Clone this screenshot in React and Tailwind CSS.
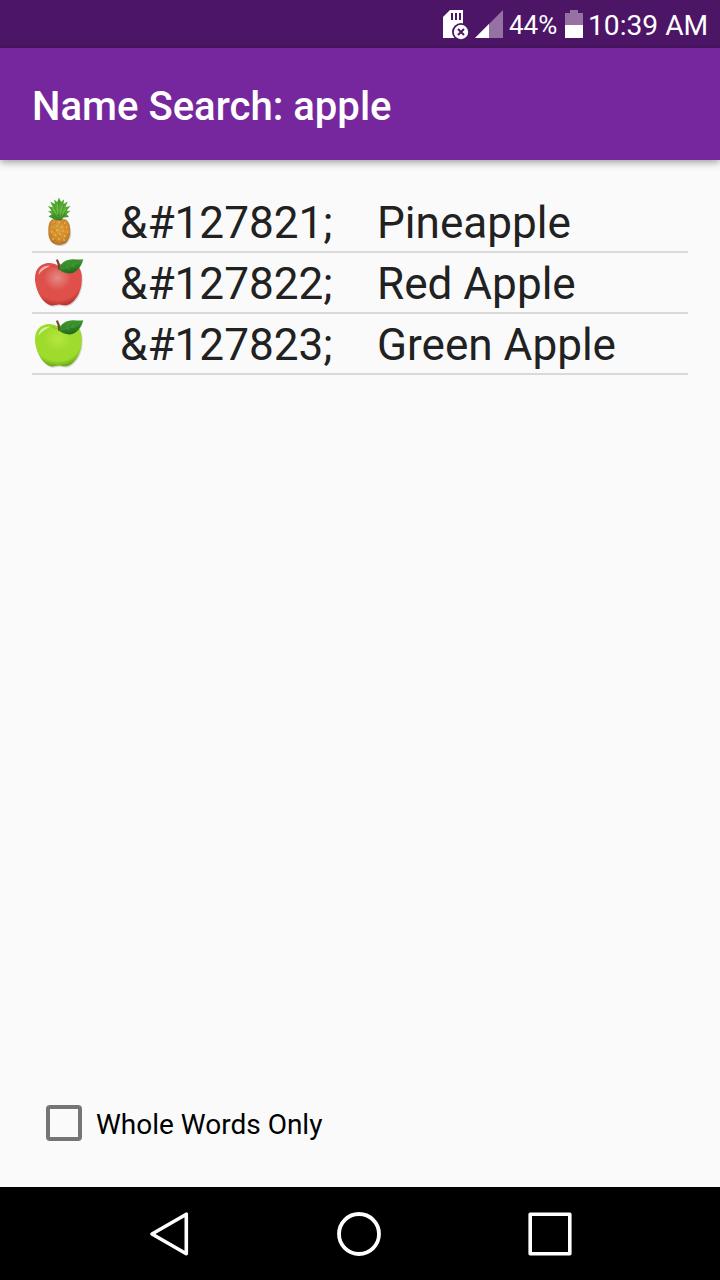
import React from "react";

const results = [
  { code: "&#127821;", name: "Pineapple", icon: <PineappleIcon /> },
  { code: "&#127822;", name: "Red Apple", icon: <AppleIcon id="red" light="#e58a83" mid="#e0504b" dark="#b93331" /> },
  { code: "&#127823;", name: "Green Apple", icon: <AppleIcon id="green" light="#b9e640" mid="#9fdb2c" dark="#69ab18" /> },
];

function PineappleIcon() {
  return (
    <svg width="56" height="59" viewBox="0 0 56 59" className="block">
      <defs>
        <radialGradient id="pine-body" cx="0.5" cy="0.4" r="0.62">
          <stop offset="0" stopColor="#e0a03a" />
          <stop offset="0.65" stopColor="#d38d30" />
          <stop offset="1" stopColor="#b27026" />
        </radialGradient>
        <linearGradient id="pine-leaf" x1="0" y1="0" x2="0" y2="1">
          <stop offset="0" stopColor="#46a02b" />
          <stop offset="0.6" stopColor="#5db439" />
          <stop offset="1" stopColor="#357d24" />
        </linearGradient>
      </defs>
      <ellipse cx="28" cy="41.5" rx="11.2" ry="12.6" fill="#000" opacity="0.16" />
      <path d="M20 27.5Q27 25.5 34 27.5Q38.5 31 38.2 38Q38.6 46 34 51Q27 55 20.5 51Q16 47 16.3 39Q15.7 31 20 27.5Z" fill="url(#pine-body)" />
      {/* skin pattern */}
      <path d="M18 33L33 51M20 28L37 46M27 27L38 38M17 41L27 53M36 33L21 51M33 28L17 44M27 27L17 36M38 41L28 53" stroke="#a46b20" strokeWidth="0.7" opacity="0.45" />
      <path d="M21 30h1.5M26 30h2M32 31h1.5M19 35h1.5M24 34h2M29 35h2M34 35h1.5M19 40h2M24 38h2M30 39h2M35 40h1M22 43h2M27 42h2M32 44h2M20 47h2M26 47h2M31 48h2" stroke="#f0bf4e" strokeWidth="1.5" opacity="0.75" />
      {/* crown */}
      <path d="M27 5.5L29 10L32 7.5L31.5 12L35.7 9.5L33.5 15L38.5 14L34.7 18.5L38.5 19.2L34.5 22L37 25L31.5 25.5L29 28.5L24 28L20.5 26.5L16.5 24.5L20 22L16 19.5L19.5 18.5L15.8 14L20.8 15.2L18.2 9.5L23 12L22 7.5L25.3 10Z" fill="url(#pine-leaf)" />
      <path d="M27 8L26.5 24M22 12L25 23M32 12L29 23M18 15.5L24 24M36 15.5L31 24M18 20L23 25M36 20L31 25" stroke="#23641b" strokeWidth="0.7" opacity="0.45" fill="none" />
      <path d="M25.5 12L26 22M30.5 13L28.5 22M21.5 17L25 23M33.5 17L30 23" stroke="#8fd158" strokeWidth="0.8" opacity="0.7" />
    </svg>
  );
}

function AppleIcon({ id, light, mid, dark }) {
  const body =
    "M26 12.5C22 9.6 15 8.8 9.5 12C3 16 1.8 24 4 33C6.3 42.5 12 50.3 18.5 52.2C22 53.1 24 51.4 27 51.5C30 51.4 32 53.1 35.5 52C42.5 49.8 48 41 49.4 32C50.6 23.5 49.8 15.5 44.5 12C39.5 9 31 9.6 26 12.5Z";
  return (
    <svg width="56" height="59" viewBox="0 0 56 59" className="block">
      <defs>
        <radialGradient id={`${id}-body`} cx="0.48" cy="0.35" r="0.65">
          <stop offset="0" stopColor={light} />
          <stop offset="0.45" stopColor={mid} />
          <stop offset="0.8" stopColor={mid} />
          <stop offset="1" stopColor={dark} />
        </radialGradient>
        <linearGradient id={`${id}-leaf`} x1="0" y1="0" x2="0.3" y2="1">
          <stop offset="0" stopColor="#3f9a30" />
          <stop offset="0.5" stopColor="#348c29" />
          <stop offset="1" stopColor="#22691f" />
        </linearGradient>
      </defs>
      <path d={body} fill="#000" opacity="0.14" transform="translate(0.8 1.2)" />
      <path d={body} fill={`url(#${id}-body)`} />
      <path d="M6.5 22C7 15.5 12 12 18 12.8C15 15 10 16.5 6.5 22Z" fill="#fff" opacity="0.6" />
      <path d="M20 12.5Q26 17 33 14" stroke={dark} strokeWidth="1.5" fill="none" opacity="0.35" />
      <path d="M27.2 16C27.2 12 26.6 9.5 25.2 7.4" stroke="#76442f" strokeWidth="2.2" fill="none" strokeLinecap="round" />
      <path d="M27 16.5C28 9.5 34.5 5.8 42 6.2C46 6.7 49 6.4 51.2 6.2C49.5 13.5 45 19.8 38 20.4C33.5 20.6 29.5 18.6 27 16.5Z" fill={`url(#${id}-leaf)`} />
      <path d="M28.5 15.8C35 14.8 42 12.8 48.5 8.2M34 14.6L37 10M39 13L42.5 9.5M35 14.6L38.5 17M40 12.8L43.5 14" stroke="#84bd68" strokeWidth="0.6" fill="none" opacity="0.4" />
    </svg>
  );
}

const StatusBar = () => {
  return (
    <div className="flex h-12 items-center bg-[#4d1566] pl-[443px] whitespace-nowrap text-white">
      {/* sd card removed */}
      <svg width="26" height="30" viewBox="0 0 26 30" className="mt-0.5 shrink-0">
        <path d="M7 0H20V28H0V7Z" fill="#fff" />
        <path d="M8 3h2v7H8zM12 3h2v7h-2zM16 3h2v7h-2z" fill="#4d1566" />
        <circle cx="18" cy="22" r="9" fill="#4d1566" />
        <circle cx="18" cy="22" r="7.2" fill="#fff" />
        <path d="M15 19L21 25M21 19L15 25" stroke="#4d1566" strokeWidth="2" />
      </svg>
      {/* signal */}
      <svg width="28" height="28" viewBox="0 0 28 28" className="ml-1.5 shrink-0">
        <path d="M28 0V28H0Z" fill="#9672a4" />
        <path d="M14 14V28H0Z" fill="#fff" />
      </svg>
      <span className="mt-0.5 ml-1.5 w-[50px] text-[26px] leading-[48px]">44%</span>
      {/* battery */}
      <svg width="18" height="28" viewBox="0 0 18 28" className="ml-1.5 shrink-0">
        <path d="M5 0h8v3h5v12H0V3h5z" fill="#9672a4" />
        <path d="M0 15h18v13H0z" fill="#fff" />
      </svg>
      <span className="mt-[3px] ml-[5px] text-[28.2px] leading-[48px]">10:39 AM</span>
    </div>
  );
};

const NavBar = () => {
  return (
    <div className="flex h-[93px] items-center justify-between bg-black pr-[147px] pl-[149px]">
      <svg width="42" height="46" viewBox="0 0 42 46" fill="none" stroke="#fff" strokeWidth="3.6" strokeLinejoin="round">
        <path d="M37.3 3.2V42.8L3 23Z" />
      </svg>
      <svg width="46" height="46" viewBox="0 0 46 46" fill="none" stroke="#fff" strokeWidth="3.8">
        <circle cx="23" cy="23" r="20" />
      </svg>
      <svg width="46" height="46" viewBox="0 0 46 46" fill="none" stroke="#fff" strokeWidth="3.6" strokeLinejoin="round">
        <path d="M3.2 3.2H42.8V42.8H3.2Z" />
      </svg>
    </div>
  );
};

const App = () => {
  return (
    <div className="flex h-[1280px] w-[720px] flex-col overflow-hidden bg-[#fafafa] font-['Roboto',sans-serif]">
      <StatusBar />

      {/* toolbar */}
      <header className="flex h-28 items-center bg-[#77279d] px-8 shadow-[0_2px_8px_rgba(0,0,0,0.4)]">
        <h1 className="mt-1.5 text-[40.1px] leading-[48px] font-medium text-white">Name Search: apple</h1>
      </header>

      {/* results */}
      <ul className="flex-1 px-8 pt-8">
        {results.map((item) => (
          <li key={item.code} className="flex h-[61px] border-b-2 border-[#d9d9d9] text-[44.1px] leading-[62px] text-[#212121]">
            <div className="w-[88px]">{item.icon}</div>
            <span className="w-[257px]">{item.code}</span>
            <span>{item.name}</span>
          </li>
        ))}
      </ul>

      {/* filter */}
      <label className="mb-[46px] flex h-9 items-center pl-[46px]">
        <span className="h-9 w-9 rounded-[4px] border-4 border-[#757575]"></span>
        <span className="mt-1 ml-3.5 text-[28px] leading-9 text-black">Whole Words Only</span>
      </label>

      <NavBar />
    </div>
  );
};

export default App;
